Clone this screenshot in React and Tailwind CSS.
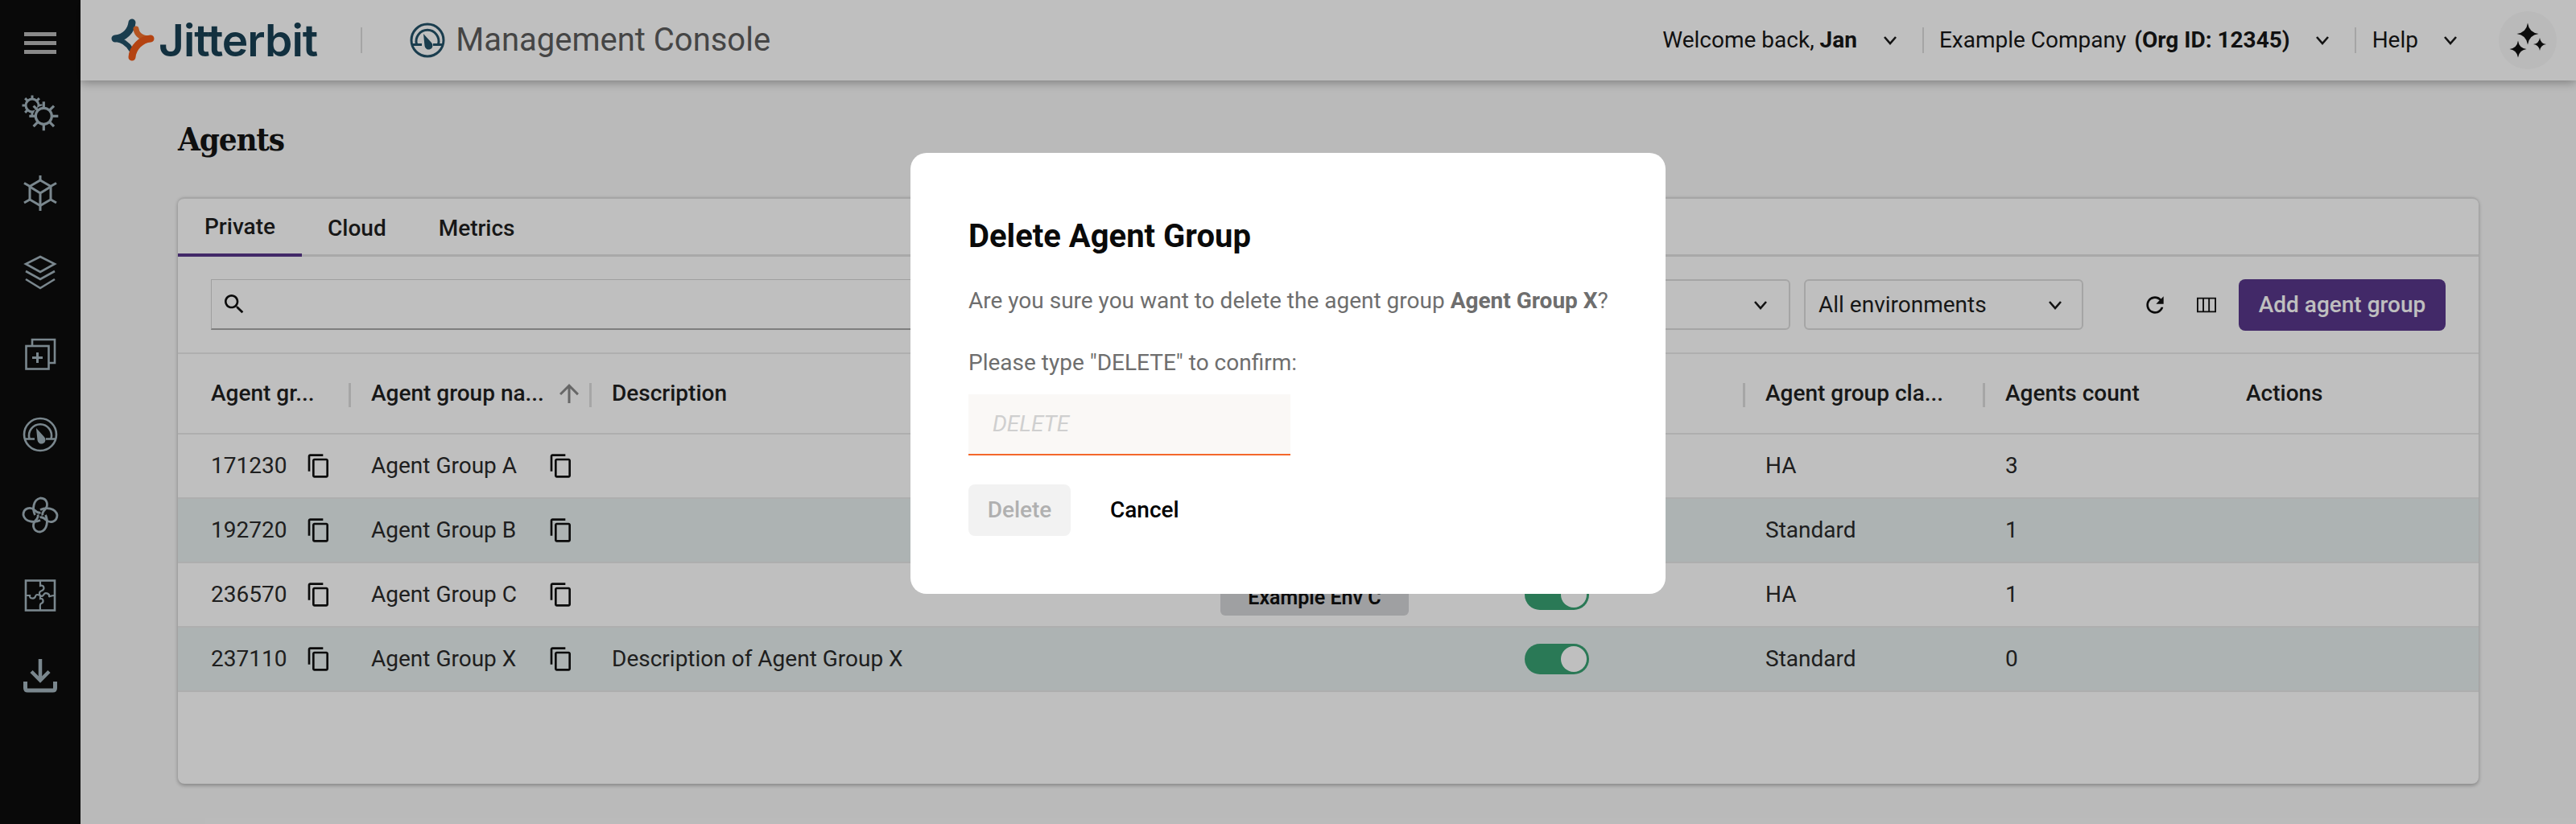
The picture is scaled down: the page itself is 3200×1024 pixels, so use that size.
import React from 'react';

const ICON = '#a3b5be';

const Chevron = ({ className = '' }) => (
  <svg width="18" height="12" viewBox="0 0 18 12" className={className}>
    <polyline points="2,2 9,10 16,2" fill="none" stroke="#1a1a1a" strokeWidth="2.6" />
  </svg>
);

const Mui = ({ d, size = 32, fill = '#1f1f1f', className = '' }) => (
  <svg width={size} height={size} viewBox="0 0 24 24" fill={fill} className={className}>
    <path d={d} />
  </svg>
);

const COPY = 'M16 1H4c-1.1 0-2 .9-2 2v14h2V3h12V1zm3 4H8c-1.1 0-2 .9-2 2v14c0 1.1.9 2 2 2h11c1.1 0 2-.9 2-2V7c0-1.1-.9-2-2-2zm0 16H8V7h11v14z';
const SEARCH = 'M15.5 14h-.79l-.28-.27C15.41 12.59 16 11.11 16 9.5 16 5.91 13.09 3 9.5 3S3 5.91 3 9.5 5.91 16 9.5 16c1.61 0 3.09-.59 4.23-1.57l.27.28v.79l5 4.99L20.49 19l-4.99-5zm-6 0C7.01 14 5 11.99 5 9.5S7.01 5 9.5 5 14 7.01 14 9.5 11.99 14 9.5 14z';
const REFRESH = 'M17.65 6.35C16.2 4.9 14.21 4 12 4c-4.42 0-7.99 3.58-7.99 8s3.57 8 7.99 8c3.73 0 6.84-2.55 7.73-6h-2.08c-.82 2.33-3.04 4-5.65 4-3.31 0-6-2.69-6-6s2.69-6 6-6c1.66 0 3.14.69 4.22 1.78L13 11h7V4l-2.35 2.35z';
const COLUMNS = 'M3 5v14h18V5H3zm5.33 12.6H4.4V6.4h3.93v11.2zm5.34 0H9.73V6.4h3.94v11.2zm5.93 0h-4.53V6.4h4.53v11.2z';
const ARROW_UP = 'M4 12l1.41 1.41L11 7.83V20h2V7.83l5.58 5.59L20 12l-8-8-8 8z';

const Gear = ({ cx, cy, r, out, teeth, w }) => (
  <g stroke={ICON} strokeWidth={w} fill="none">
    <circle cx={cx} cy={cy} r={r} />
    {Array.from({ length: teeth }).map((_, i) => {
      const a = (i / teeth) * Math.PI * 2;
      return (
        <line
          key={i}
          x1={cx + Math.cos(a) * r}
          y1={cy + Math.sin(a) * r}
          x2={cx + Math.cos(a) * out}
          y2={cy + Math.sin(a) * out}
        />
      );
    })}
  </g>
);

const GearsIcon = () => (
  <svg width="48" height="48" viewBox="0 0 48 48">
    <Gear cx={14} cy={15} r={8} out={12.5} teeth={8} w={3} />
    <circle cx={28.3} cy={28.3} r={13} fill="#0d0d0d" />
    <Gear cx={28.3} cy={28.3} r={10} out={18} teeth={8} w={3.2} />
  </svg>
);

const CubeIcon = () => (
  <svg width="48" height="48" viewBox="0 0 48 48" fill="none" stroke={ICON} strokeWidth="3">
    <path d="M24 8L37 15.5V32L24 39.5L11 32V15.5Z" />
    <path d="M11 16L24 24L37 16M24 24V46M24 8V2M37 15.5L44 11.5M11 15.5L4 11.5M37 32L44 36M11 32L4 36" />
  </svg>
);

const LayersIcon = () => (
  <svg width="48" height="48" viewBox="0 0 48 48" fill="none" stroke={ICON} strokeWidth="2.6">
    <path d="M24 3L42 12L24 22L6 12Z" />
    <path d="M6 21L24 31L42 21" />
    <path d="M6 31L24 42L42 31" />
  </svg>
);

const CopyPlusIcon = () => (
  <svg width="48" height="48" viewBox="0 0 48 48" fill="none" stroke={ICON} strokeWidth="2.6">
    <path d="M14 13V6H42V35H35" />
    <rect x="6.5" y="14" width="28" height="28.5" />
    <path d="M20.5 22V35M14 28.5H27" strokeWidth="3" />
  </svg>
);

const GaugeIcon = ({ size = 44, color = ICON, sw = 2.6 }) => (
  <svg width={size} height={size} viewBox="0 0 44 44" fill="none" stroke={color} strokeWidth={sw}>
    <circle cx="22" cy="22" r="20" />
    <path d="M8.5 27A14 14 0 1 1 35.5 27" />
    <path d="M2 27.5H15M29 27.5H42" />
    <path d="M17 14L27 25A5 5 0 1 1 18.5 29Z" fill={color} stroke="none" />
  </svg>
);

const FlowerIcon = () => (
  <svg width="48" height="48" viewBox="0 0 48 48" fill="none" stroke={ICON} strokeWidth="2.8">
    <path d="M17.5 24C14 17 15 5 24 3C33 3 34.5 12 30 17C27.5 19.5 26 21.5 27 24.5" />
    <path d="M24 17.5C31 14 43 15 45 24C45 33 36 34.5 31 30C28.5 27.5 26.5 26 23.5 27" />
    <path d="M30.5 24C34 31 33 43 24 45C15 45 13.5 36 18 31C20.5 28.5 22 26.5 21 23.5" />
    <path d="M24 30.5C17 34 5 33 3 24C3 15 12 13.5 17 18C19.5 20.5 21.5 22 24.5 21" />
  </svg>
);

const PuzzleIcon = () => (
  <svg width="48" height="48" viewBox="0 0 48 48" fill="none" stroke={ICON} strokeWidth="2.2">
    <rect x="6" y="5.5" width="36" height="37" strokeWidth="2.6" />
    <path d="M24 5.5V12C29 10 30 17 26 18C23 19 22 21 24 24C21 23 19 22 18 25C17 29 10 28 11 24H6" />
    <path d="M24 24C26 26 28 24 29 22C31 20 36 22 35 25C35 26 37 24 42 24" />
    <path d="M24 24V28C28 27 29 33 25 34C23 35 24 38 24 42.5" />
  </svg>
);

const DownloadIcon = () => (
  <svg width="48" height="48" viewBox="0 0 48 48" fill="none" stroke={ICON}>
    <path d="M24 3V30" strokeWidth="4.5" />
    <path d="M13 18.5L24 29.5L35 18.5" strokeWidth="4.5" />
    <path d="M5.5 31V39C5.5 41 6.5 42 8.5 42H39.5C41.5 42 42.5 41 42.5 39V31" strokeWidth="5" />
  </svg>
);

const star = (cx, cy, r) =>
  `M${cx} ${cy - r}Q${cx + r * 0.12} ${cy - r * 0.12} ${cx + r} ${cy}Q${cx + r * 0.12} ${cy + r * 0.12} ${cx} ${cy + r}Q${cx - r * 0.12} ${cy + r * 0.12} ${cx - r} ${cy}Q${cx - r * 0.12} ${cy - r * 0.12} ${cx} ${cy - r}Z`;

const Logo = () => (
  <svg width="54" height="54" viewBox="0 0 54 54" fill="none" strokeLinecap="round">
    <path d="M26 5C25 15 17 24 5 25" stroke="#235269" strokeWidth="9" />
    <path d="M6 26C15 27 21 32 25 39" stroke="#235269" strokeWidth="6" />
    <path d="M31 13C32 20 38 25 49 25" stroke="#f0702c" strokeWidth="7" />
    <path d="M49 25C37 26 27 36 26 48" stroke="#f05a18" strokeWidth="9" />
  </svg>
);

const HeaderDivider = () => <div className="w-[2px] h-8 bg-[#dcdcdc]" />;

const Header = () => (
  <header className="relative z-10 h-[100px] shrink-0 bg-white flex items-center pl-[38px] shadow-[0_2px_12px_rgba(0,0,0,0.35)]">
    <Logo />
    <span className="ml-[5px] font-['Inter',sans-serif] font-semibold text-[55px] leading-none tracking-[-1px] text-[#184054]">
      Jitterbit
    </span>
    <div className="ml-[54px]">
      <HeaderDivider />
    </div>
    <div className="ml-[59px] flex">
      <GaugeIcon color="#235269" sw={3} />
    </div>
    <span className="ml-[13px] text-[40px] leading-none text-[#5d5d5d]">Management Console</span>
    <div className="ml-auto flex items-center text-[28px] text-[#171717]">
      <span>
        Welcome back, <b className="font-bold">Jan</b>
      </span>
      <Chevron className="ml-[32px] mr-[31px]" />
      <HeaderDivider />
      <span className="ml-[19px]">
        Example Company <b className="ml-[3px] font-bold">(Org ID: 12345)</b>
      </span>
      <Chevron className="ml-[31px] mr-[31px]" />
      <HeaderDivider />
      <span className="ml-[20px]">Help</span>
      <Chevron className="ml-[31px] mr-[51px]" />
      <div className="w-[72px] h-[72px] rounded-full bg-[#f8f8f8] mr-[24px] flex items-center justify-center">
        <svg width="72" height="72" viewBox="0 0 72 72" fill="#111">
          <path d={star(36, 28, 13.5)} />
          <path d={star(24, 47, 10.5)} />
          <path d={star(51, 41, 8)} />
        </svg>
      </div>
    </div>
  </header>
);

const Sidebar = () => (
  <aside className="w-[100px] shrink-0 bg-[#0d0d0d] flex flex-col items-center">
    <div className="h-[90px] w-full flex flex-col items-center pt-[40px] gap-[6px]">
      <div className="w-10 h-[5px] bg-[#b8b8b8]" />
      <div className="w-10 h-[5px] bg-[#b8b8b8]" />
      <div className="w-10 h-[5px] bg-[#b8b8b8]" />
    </div>
    {[GearsIcon, CubeIcon, LayersIcon, CopyPlusIcon, GaugeIcon, FlowerIcon, PuzzleIcon, DownloadIcon].map((Icon, i) => (
      <div key={i} className="h-[100px] w-full flex items-center justify-center">
        <Icon />
      </div>
    ))}
  </aside>
);

const COLS = 'grid grid-cols-[199px_299px_756px_378px_299px_298px_299px_1fr] pl-[41px] items-center';

const HeadCell = ({ children, sep = true, icon }) => (
  <div className="relative flex items-center h-full font-medium">
    <span className="truncate">{children}</span>
    {icon}
    {sep && <div className="absolute right-[25px] top-[36px] w-[3px] h-[30px] bg-[#dedede]" />}
  </div>
);

const rows = [
  { id: '171230', name: 'Agent Group A', env: 'Example Env A', cls: 'HA', count: '3' },
  { id: '192720', name: 'Agent Group B', env: 'Example Env B', cls: 'Standard', count: '1' },
  { id: '236570', name: 'Agent Group C', env: 'Example Env C', cls: 'HA', count: '1' },
  { id: '237110', name: 'Agent Group X', desc: 'Description of Agent Group X', cls: 'Standard', count: '0' },
];

const Row = ({ row, alt }) => (
  <div className={`${COLS} h-20 border-b-[2px] border-[#e8e8e8] text-[28px] text-[#2a2a2a] ${alt ? 'bg-[#e7efef]' : ''}`}>
    <div className="flex items-center">
      {row.id}
      <Mui d={COPY} fill="#111" className="ml-[24px]" />
    </div>
    <div className="flex items-center">
      <span className="w-[220px]">{row.name}</span>
      <Mui d={COPY} fill="#111" />
    </div>
    <div>{row.desc}</div>
    <div>
      {row.env && (
        <span className="mt-[7px] flex w-[234px] h-[44px] items-center justify-center rounded-md bg-[#d5d6d8] text-[25px] font-semibold text-[#111]">
          {row.env}
        </span>
      )}
    </div>
    <div>
      <div className="w-20 h-[38px] rounded-full bg-[#39a273] flex items-center justify-end pr-[3px]">
        <div className="w-8 h-8 rounded-full bg-white" />
      </div>
    </div>
    <div>{row.cls}</div>
    <div>{row.count}</div>
    <div />
  </div>
);

const Toolbar = () => (
  <div className="h-[121px] border-b-[2px] border-[#eaeaea] flex items-center px-[41px]">
    <div className="w-[1000px] h-[63px] border border-[#d5d5d5] border-b-[2px] border-b-[#a8a8a8] flex items-center pl-[12px]">
      <Mui d={SEARCH} fill="#111" />
    </div>
    <div className="ml-[17px] flex-1 h-[63px] rounded-md border-[2px] border-[#dcdcdc] flex items-center justify-end pr-[26px]">
      <Chevron />
    </div>
    <div className="ml-[17px] w-[347px] h-[63px] rounded-md border-[2px] border-[#dcdcdc] flex items-center justify-between pl-[16px] pr-[24px] text-[28px] text-[#1f1f1f]">
      All environments
      <Chevron />
    </div>
    <Mui d={REFRESH} fill="#111" className="ml-[73px]" />
    <Mui d={COLUMNS} fill="#111" className="ml-[32px]" />
    <button className="ml-[24px] w-[257px] h-[64px] rounded-lg bg-[#58378b] text-white text-[28px] font-medium">
      Add agent group
    </button>
  </div>
);

const Card = () => (
  <section className="mt-[47px] h-[729px] rounded-lg bg-white border-t-[2px] border-[#dedede] shadow-[0_2px_5px_rgba(0,0,0,0.3)] overflow-hidden">
    <div className="h-[72px] border-b-[3px] border-[#e2e2e2] flex text-[28px] font-medium text-[#1f1f1f]">
      <div className="h-[72px] w-[154px] pt-[2px] flex items-center justify-center border-b-[4px] border-[#58378b]">Private</div>
      <div className="h-[72px] px-[32px] pt-[2px] flex items-center">Cloud</div>
      <div className="h-[72px] px-[33px] pt-[2px] flex items-center">Metrics</div>
    </div>
    <Toolbar />
    <div className={`${COLS} h-[100px] border-b-[2px] border-[#e8e8e8] text-[28px] text-[#1f1f1f]`}>
      <HeadCell>Agent gr...</HeadCell>
      <HeadCell icon={<Mui d={ARROW_UP} size={36} fill="#8a8a8a" className="absolute left-[228px]" />}>Agent group na...</HeadCell>
      <HeadCell sep={false}>Description</HeadCell>
      <HeadCell sep={false}>Environment</HeadCell>
      <HeadCell>Enabled</HeadCell>
      <HeadCell>Agent group cla...</HeadCell>
      <HeadCell sep={false}>Agents count</HeadCell>
      <HeadCell sep={false}>Actions</HeadCell>
    </div>
    {rows.map((row, i) => (
      <Row key={row.id} row={row} alt={i % 2 === 1} />
    ))}
  </section>
);

const DeleteDialog = () => (
  <div className="absolute inset-0 z-20 bg-black/25 flex justify-center items-start pt-[190px]">
    <div className="w-[938px] h-[548px] rounded-[20px] bg-white pl-[72px] pr-[40px] pt-[80px]">
      <h2 className="text-[40px] leading-[48px] font-bold text-[#0a0a0a]">Delete Agent Group</h2>
      <p className="mt-[38px] text-[28px] leading-[36px] text-[#6e6e6e]">
        Are you sure you want to delete the agent group <b className="font-bold">Agent Group X</b>?
      </p>
      <p className="mt-[41px] text-[28px] leading-[36px] text-[#6e6e6e]">Please type "DELETE" to confirm:</p>
      <div className="mt-[21px] w-[400px] h-[76px] bg-[#faf8f6] border-b-[2px] border-[#f4672b] flex items-center pl-[30px] italic text-[28px] text-[#cfcfcf]">
        DELETE
      </div>
      <div className="mt-[36px] flex items-center">
        <button className="w-[127px] h-[64px] rounded-lg bg-[#f2f2f2] text-[#b0b0b0] text-[28px] font-medium">Delete</button>
        <button className="ml-[49px] text-[28px] font-medium text-black">Cancel</button>
      </div>
    </div>
  </div>
);

export default function App() {
  return (
    <div className="relative w-full h-[1024px] overflow-hidden flex bg-[#f9f9f9] font-['Roboto',sans-serif]">
      <Sidebar />
      <div className="flex-1 min-w-0 flex flex-col">
        <Header />
        <main className="flex-1 px-[121px] pt-[48px]">
          <h1 className="font-['DejaVu_Serif_Condensed','DejaVu_Serif',serif] font-bold text-[40px] leading-[50px] tracking-[-1.2px] text-[#141414]">Agents</h1>
          <Card />
        </main>
      </div>
      <DeleteDialog />
    </div>
  );
}
